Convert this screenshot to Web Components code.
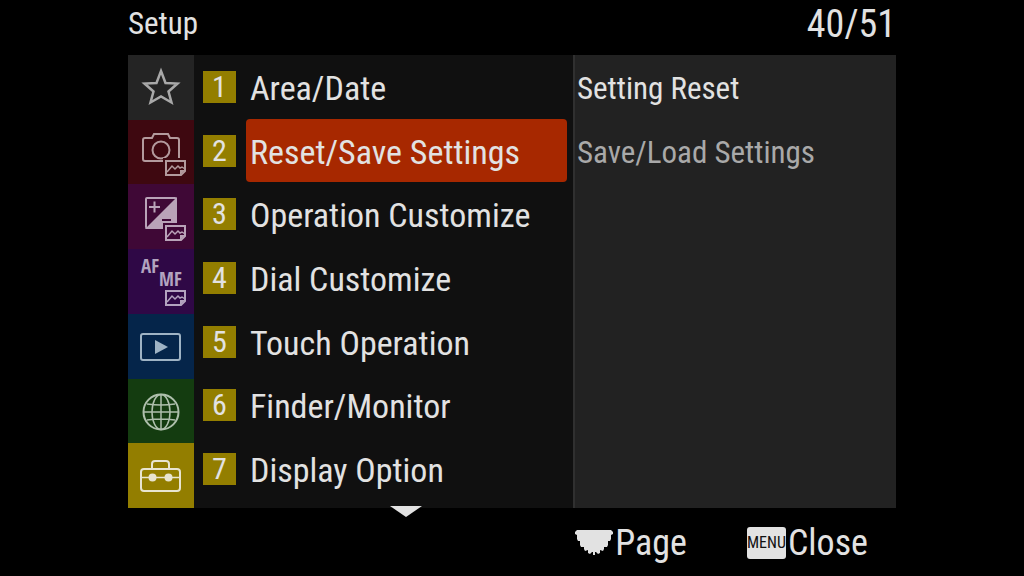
<!DOCTYPE html>
<html lang="en">
<head>
<meta charset="utf-8">
<title>Setup</title>
<style>
    body {
        margin: 0;
        background: #000;
        color: #e2e2e2;
        font-family: "Roboto Condensed", "Roboto", "Liberation Sans", sans-serif;
    }
</style>
</head>
<body>
<camera-menu heading="Setup" page="40/51">
    <menu-tab slot="tabs" icon="star" label="My Menu"></menu-tab>
    <menu-tab slot="tabs" icon="camera" label="Shooting"></menu-tab>
    <menu-tab slot="tabs" icon="exposure" label="Exposure/Color"></menu-tab>
    <menu-tab slot="tabs" icon="focus" label="Focus"></menu-tab>
    <menu-tab slot="tabs" icon="playback" label="Playback"></menu-tab>
    <menu-tab slot="tabs" icon="network" label="Network"></menu-tab>
    <menu-tab slot="tabs" icon="setup" label="Setup" active></menu-tab>

    <menu-row slot="rows" number="1">Area/Date</menu-row>
    <menu-row slot="rows" number="2" selected>Reset/Save Settings</menu-row>
    <menu-row slot="rows" number="3">Operation Customize</menu-row>
    <menu-row slot="rows" number="4">Dial Customize</menu-row>
    <menu-row slot="rows" number="5">Touch Operation</menu-row>
    <menu-row slot="rows" number="6">Finder/Monitor</menu-row>
    <menu-row slot="rows" number="7">Display Option</menu-row>

    <sub-item slot="items">Setting Reset</sub-item>
    <sub-item slot="items" dim>Save/Load Settings</sub-item>

    <key-hint slot="hints" key="dial">Page</key-hint>
    <key-hint slot="hints" key="menu">Close</key-hint>
</camera-menu>

<script>
// small "still image" mark in the corner of the shooting tabs
const STILL = `
    <path fill="var(--tab)" stroke="none" d="M35 38h24v19H35z"/>
    <path d="M38 41h19v10l-4 4H38z"/>
    <path fill="currentColor" stroke="none" d="M57 50h-5v5z"/>
    <path stroke-width="1.5" d="M39 52l5-6 3 3 3-3 2 2 2-1 3 2"/>`;

const TABS = {
    star: {
        bg: '#242424', fg: '#a8a8a8',
        art: '<path stroke-width="2.5" d="M33 16l4.5 12 12 .5-9 8 3 11L33 41.5l-10.5 6 3-11-9-8 12-.5z"/>'
    },
    camera: {
        bg: '#3e0810', fg: '#b39a9d',
        art: `<path d="M51 38V20a2 2 0 0 0-2-2h-7l-2-4H26l-2 4h-7a2 2 0 0 0-2 2v19a2 2 0 0 0 2 2h19"/>
              <circle cx="33" cy="30" r="8.5"/>${STILL}`
    },
    exposure: {
        bg: '#3f0836', fg: '#b9a3b8',
        art: `<rect x="18" y="13" width="30" height="30" rx="1"/>
              <path fill="currentColor" stroke="none" d="M49 12v32H17z"/>
              <path d="M21 22h11M26.5 16.5v11"/>
              <path stroke="var(--tab)" d="M34 35h9"/>${STILL}`
    },
    focus: {
        bg: '#2f0846', fg: '#b3a3bf',
        art: `${STILL}<g fill="currentColor" stroke="none" font-family="Open Sans Condensed, Roboto Condensed, sans-serif" font-size="19" font-weight="700">
                <text x="13" y="23">AF</text><text x="31" y="36">MF</text>
              </g>`
    },
    playback: {
        bg: '#05254a', fg: '#9fb3c4',
        art: `<rect x="13" y="20" width="39" height="26" rx="2"/>
              <path fill="currentColor" stroke="none" d="M27 26v14l13-7z"/>`
    },
    network: {
        bg: '#143c10', fg: '#aebfac',
        art: `<circle cx="33" cy="33" r="17.5"/>
              <path stroke-width="1.5" d="M33 15.5v35M15.5 33h35M19 25q14 2 28 0M19 41q14-2 28 0"/>
              <ellipse stroke-width="1.5" cx="33" cy="33" rx="9" ry="17.5"/>`
    },
    setup: {
        bg: '#937e00', fg: '#e8e4d0',
        art: `<rect x="13" y="25" width="39" height="22" rx="3"/>
              <path d="M24 25v-5q0-3 3-3h11q3 0 3 3v5"/>
              <path stroke-width="1.5" d="M13 33.5h39"/>
              <circle cx="24.5" cy="33.5" r="4" fill="currentColor" stroke="none"/>
              <circle cx="40.5" cy="33.5" r="4" fill="currentColor" stroke="none"/>`
    }
};

class MenuTab extends HTMLElement {
    constructor() {
        super();
        this.attachShadow({ mode: 'open' });
    }

    connectedCallback() {
        const tab = TABS[this.getAttribute('icon')];
        this.shadowRoot.innerHTML = `
            <style>
                :host {
                    --tab: ${tab.bg};
                    display: flex;
                    flex: 1;
                }
                button {
                    flex: 1;
                    display: flex;
                    align-items: center;
                    justify-content: center;
                    padding: 0;
                    border: 0;
                    background: var(--tab);
                    color: ${tab.fg};
                    font: inherit;
                }
                svg {
                    fill: none;
                    stroke: currentColor;
                    stroke-width: 2;
                }
            </style>
            <button type="button" aria-label="${this.getAttribute('label')}" aria-pressed="${this.hasAttribute('active')}">
                <svg width="66" height="64" viewBox="0 0 66 64">${tab.art}</svg>
            </button>
        `;
    }
}

class MenuRow extends HTMLElement {
    constructor() {
        super();
        this.attachShadow({ mode: 'open' });
    }

    connectedCallback() {
        this.shadowRoot.innerHTML = `
            <style>
                :host {
                    display: flex;
                    flex: 1;
                    align-items: center;
                    gap: 10px;
                    padding: 0 6px 0 9px;
                }
                .number {
                    width: 33px;
                    background: #937e00;
                    font-size: 30px;
                    line-height: 32px;
                    text-align: center;
                }
                button {
                    flex: 1;
                    align-self: stretch;
                    padding: 2px 4px 0;
                    border: 0;
                    border-radius: 4px;
                    background: none;
                    color: inherit;
                    font: inherit;
                    font-size: 34px;
                    text-align: left;
                    white-space: nowrap;
                }
                :host([selected]) button {
                    background: #a72800;
                }
            </style>
            <span class="number">${this.getAttribute('number')}</span>
            <button type="button"><slot></slot></button>
        `;
    }
}

class SubItem extends HTMLElement {
    constructor() {
        super();
        this.attachShadow({ mode: 'open' });
        this.shadowRoot.innerHTML = `
            <style>
                :host {
                    display: flex;
                    height: 64px;
                }
                :host([dim]) {
                    color: #a9a9a9;
                }
                button {
                    flex: 1;
                    padding: 0 2px;
                    border: 0;
                    background: none;
                    color: inherit;
                    font: inherit;
                    font-size: 31px;
                    text-align: left;
                    white-space: nowrap;
                }
            </style>
            <button type="button"><slot></slot></button>
        `;
    }
}

class KeyHint extends HTMLElement {
    constructor() {
        super();
        this.attachShadow({ mode: 'open' });
    }

    connectedCallback() {
        const dial = `
            <svg width="38" height="26" viewBox="0 0 38 26" fill="currentColor" aria-hidden="true">
                <path d="M2 0H36L38 2V4L36 5V9L35 11H33V15L32 17H29V19L28 21L25 20V23L23 24L21 22H20V25H18V22H17L15 24L13 23V20L10 21L9 19V17H6L5 15V11H3L2 9V5L0 4V2z"/>
            </svg>`;
        const menu = '<span class="cap">MENU</span>';
        this.shadowRoot.innerHTML = `
            <style>
                :host {
                    display: block;
                }
                button {
                    display: flex;
                    align-items: center;
                    gap: 2px;
                    padding: 0;
                    border: 0;
                    background: none;
                    color: inherit;
                    font: inherit;
                    font-size: 36px;
                }
                .cap {
                    width: 39px;
                    border-radius: 3px;
                    background: #e2e2e2;
                    color: #111;
                    font-size: 16px;
                    line-height: 32px;
                    text-align: center;
                }
            </style>
            <button type="button">${this.getAttribute('key') === 'dial' ? dial : menu}<slot></slot></button>
        `;
    }
}

class CameraMenu extends HTMLElement {
    constructor() {
        super();
        this.attachShadow({ mode: 'open' });
    }

    connectedCallback() {
        this.shadowRoot.innerHTML = `
            <style>
                :host {
                    display: grid;
                    grid-template-rows: 55px 1fr 68px;
                    box-sizing: border-box;
                    min-height: 100vh;
                    padding: 0 12.5%;
                }
                header {
                    display: flex;
                    justify-content: space-between;
                    align-items: center;
                    padding: 0 0 8px;
                }
                h1 {
                    margin: 0;
                    font-size: 31px;
                    font-weight: 400;
                }
                .page {
                    font-size: 38px;
                }
                main {
                    display: grid;
                    grid-template-columns: 66px 379fr 323fr;
                    background: #101010;
                }
                nav, .rows {
                    display: flex;
                    flex-direction: column;
                }
                .rows {
                    position: relative;
                    padding: 0 0 7px;
                }
                .more {
                    position: absolute;
                    left: 56%;
                    bottom: -9px;
                    margin-left: -16px;
                }
                .items {
                    padding-top: 1px;
                    border-left: 2px solid #303030;
                    background: #222;
                }
                footer {
                    display: flex;
                    justify-content: flex-end;
                    align-items: center;
                    gap: 60px;
                    padding: 2px 28px 0 0;
                }
            </style>
            <header>
                <h1>${this.getAttribute('heading')}</h1>
                <span class="page">${this.getAttribute('page')}</span>
            </header>
            <main>
                <nav><slot name="tabs"></slot></nav>
                <section class="rows">
                    <slot name="rows"></slot>
                    <svg class="more" width="32" height="11" viewBox="0 0 32 11" aria-hidden="true">
                        <path fill="#e2e2e2" d="M0 0h32L16 11z"/>
                    </svg>
                </section>
                <section class="items"><slot name="items"></slot></section>
            </main>
            <footer><slot name="hints"></slot></footer>
        `;
    }
}

customElements.define('menu-tab', MenuTab);
customElements.define('menu-row', MenuRow);
customElements.define('sub-item', SubItem);
customElements.define('key-hint', KeyHint);
customElements.define('camera-menu', CameraMenu);
</script>
</body>
</html>
